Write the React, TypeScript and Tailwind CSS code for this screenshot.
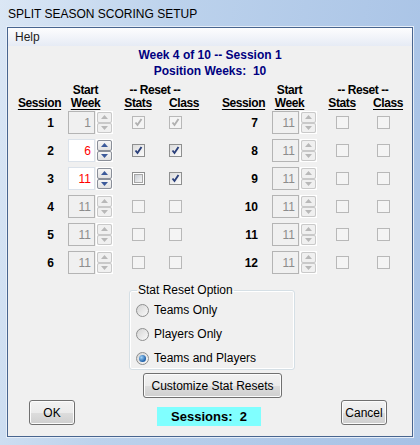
import { clsx } from "clsx";

const FONT = "font-['Liberation_Sans',Arial,sans-serif]";

function SpinArrow({ up, enabled }: { up?: boolean; enabled: boolean }) {
  return (
    <div
      className={clsx(
        "flex h-[11px] w-[15px] items-center justify-center rounded-[2px] border",
        enabled
          ? "border-[#8a8f99] bg-[linear-gradient(#f6f6f6,#e2e2e2)]"
          : "border-[#c9c9c9] bg-[#f0f0f0]"
      )}
    >
      <svg width="7" height="4" viewBox="0 0 7 4">
        <path
          d={up ? "M0 4 L3.5 0 L7 4 Z" : "M0 0 L3.5 4 L7 0 Z"}
          fill={enabled ? "#3c5a9a" : "#b8b8b8"}
        />
      </svg>
    </div>
  );
}

function SpinBox({ value, enabled }: { value: number; enabled: boolean }) {
  return (
    <div className="flex h-[23px] items-stretch">
      <div
        className={clsx(
          "flex w-[28px] items-center justify-end border pr-[3px] text-[12px]",
          enabled
            ? "border-[#dbe2ea] bg-white text-[#ff0000]"
            : "border-[#b4b4b4] bg-[#f0f0f0] text-[#8c8c8c]"
        )}
      >
        {value}
      </div>
      <div className="ml-[1px] flex flex-col justify-between border border-white">
        <SpinArrow up enabled={enabled} />
        <SpinArrow enabled={enabled} />
      </div>
    </div>
  );
}

function CheckBox({ checked, enabled }: { checked?: boolean; enabled: boolean }) {
  return (
    <div
      className={clsx(
        "flex h-[13px] w-[13px] items-center justify-center border",
        enabled ? "border-[#8e8f8f] bg-white" : "border-[#b8b8b8] bg-[#f4f4f4]"
      )}
    >
      {enabled && !checked && (
        <div className="h-[9px] w-[9px] border border-[#a7a7a7] bg-[linear-gradient(135deg,#cbcfd5,#f4f4f4)]" />
      )}
      {enabled && checked && (
        <div className="h-[11px] w-[11px] bg-[linear-gradient(135deg,#dcdcdc,#fbfbfb)]" />
      )}
      {checked && (
        <svg width="11" height="11" viewBox="0 0 11 11" className="absolute">
          <path
            d="M2.5 5.5 L4.5 8 L8.5 2"
            fill="none"
            stroke={enabled ? "#2a3f7a" : "#b0b0b0"}
            strokeWidth="1.9"
          />
        </svg>
      )}
    </div>
  );
}

type Row = { n: number; week: number; enabled: boolean; stats?: boolean; cls?: boolean };

const leftRows: Row[] = [
  { n: 1, week: 1, enabled: false, stats: true, cls: true },
  { n: 2, week: 6, enabled: true, stats: true, cls: true },
  { n: 3, week: 11, enabled: true, stats: false, cls: true },
  { n: 4, week: 11, enabled: false },
  { n: 5, week: 11, enabled: false },
  { n: 6, week: 11, enabled: false },
];

const rightRows: Row[] = [7, 8, 9, 10, 11, 12].map((n) => ({ n, week: 11, enabled: false }));

function SessionBlock({ rows, grid }: { rows: Row[]; grid: string }) {
  return (
    <div className="flex flex-col">
      {/* headers */}
      <div className={clsx("grid text-[12px] font-bold leading-[13px] tracking-[-0.4px] text-black", grid)}>
        <div />
        <div className="pr-[10px] text-center">Start</div>
        <div className="col-span-2 pl-[10px] text-center">-- Reset --</div>
        <div className="pr-[4px] text-center underline underline-offset-[1.5px]">Session</div>
        <div className="pr-[10px] text-center underline underline-offset-[1.5px]">Week</div>
        <div className="text-center underline underline-offset-[1.5px]">Stats</div>
        <div className="pl-[6px] text-center underline underline-offset-[1.5px]">Class</div>
      </div>
      <div className="mt-[1px] flex flex-col gap-[5px]">
        {rows.map((r) => (
          <div key={r.n} className={clsx("grid h-[23px] items-center", grid)}>
            <div className="pr-[14px] text-right text-[12px] font-bold">{r.n}</div>
            <SpinBox value={r.week} enabled={r.enabled} />
            <div className="relative flex justify-center">
              <CheckBox checked={r.stats} enabled={r.enabled} />
            </div>
            <div className="relative flex justify-center">
              <CheckBox checked={r.cls} enabled={r.enabled} />
            </div>
          </div>
        ))}
      </div>
    </div>
  );
}

function Radio({ label, checked }: { label: string; checked?: boolean }) {
  return (
    <div className="flex h-[24px] items-center gap-[5px]">
      <div className="flex h-[13px] w-[13px] items-center justify-center rounded-full border border-[#8e8f8f] bg-[linear-gradient(135deg,#d4d4d4,#fafafa)]">
        {checked && (
          <div className="h-[7px] w-[7px] rounded-full bg-[radial-gradient(circle_at_35%_35%,#9fd2f7,#1c5ea8_70%)]" />
        )}
      </div>
      <span className="text-[12px]">{label}</span>
    </div>
  );
}

function Button({ children, className }: { children: React.ReactNode; className?: string }) {
  return (
    <div
      className={clsx(
        "flex items-center justify-center rounded-[3px] border border-[#707070] bg-[linear-gradient(#f2f2f2_0%,#ebebeb_50%,#dddddd_51%,#cfcfcf_100%)] text-[12px] shadow-[inset_0_0_0_1px_#fcfcfc]",
        className
      )}
    >
      {children}
    </div>
  );
}

export default function App() {
  return (
    <div
      className={clsx(
        "flex h-[445px] w-[420px] flex-col bg-[linear-gradient(100deg,#dbe7f5_0%,#bcd2ec_35%,#a6c1e5_100%)] text-black",
        FONT
      )}
    >
      {/* title bar */}
      <div className="flex h-[27px] items-center pl-[8px] text-[12px] leading-none text-black">
        SPLIT SEASON SCORING SETUP
      </div>

      {/* client area */}
      <div className="mx-[7px] mb-[8px] flex flex-1 flex-col border border-[#48658f] bg-[#f0f0f0] shadow-[0_0_0_1px_#e6eef8]">
        {/* menu */}
        <div className="flex h-[18px] items-center bg-[linear-gradient(#fdfdfe,#e6ebf5)] pl-[7px] text-[12px] text-[#1c1c1c]">
          Help
        </div>

        <div className="flex flex-col items-center pt-[1px] text-[12px] font-bold leading-[16px] text-[#000080]">
          <div>Week 4 of 10 -- Session 1</div>
          <div>Position Weeks:&nbsp; 10</div>
        </div>

        <div className="mt-[5px] flex pl-[7px]">
          <SessionBlock rows={leftRows} grid="grid-cols-[53px_45px_50px_24px]" />
          <div className="ml-[32px]">
            <SessionBlock rows={rightRows} grid="grid-cols-[53px_45px_50px_32px]" />
          </div>
        </div>

        {/* stat reset option */}
        <fieldset className="ml-[121px] mt-[9px] h-[87px] w-[166px] rounded-[3px] border border-[#d5dfe5] pl-[6px] shadow-[inset_0_0_0_1px_#ffffff]">
          <legend className="ml-[1px] px-[1px] text-[12px] leading-[14px]">Stat Reset Option</legend>
          <div className="mt-[1px] flex flex-col">
            <Radio label="Teams Only" />
            <Radio label="Players Only" />
            <Radio label="Teams and Players" checked />
          </div>
        </fieldset>

        <Button className="ml-[135px] mt-[3px] h-[25px] w-[139px]">Customize Stat Resets</Button>

        <div className="mt-[2px] flex items-start">
          <Button className="ml-[21px] h-[25px] w-[46px]">OK</Button>
          <div className="ml-[82px] mt-[7px] flex h-[19px] w-[104px] items-center justify-center bg-[#80ffff] text-[13px] font-bold">
            Sessions:&nbsp; 2
          </div>
          <Button className="ml-[80px] h-[25px] w-[46px]">Cancel</Button>
        </div>
      </div>
    </div>
  );
}
